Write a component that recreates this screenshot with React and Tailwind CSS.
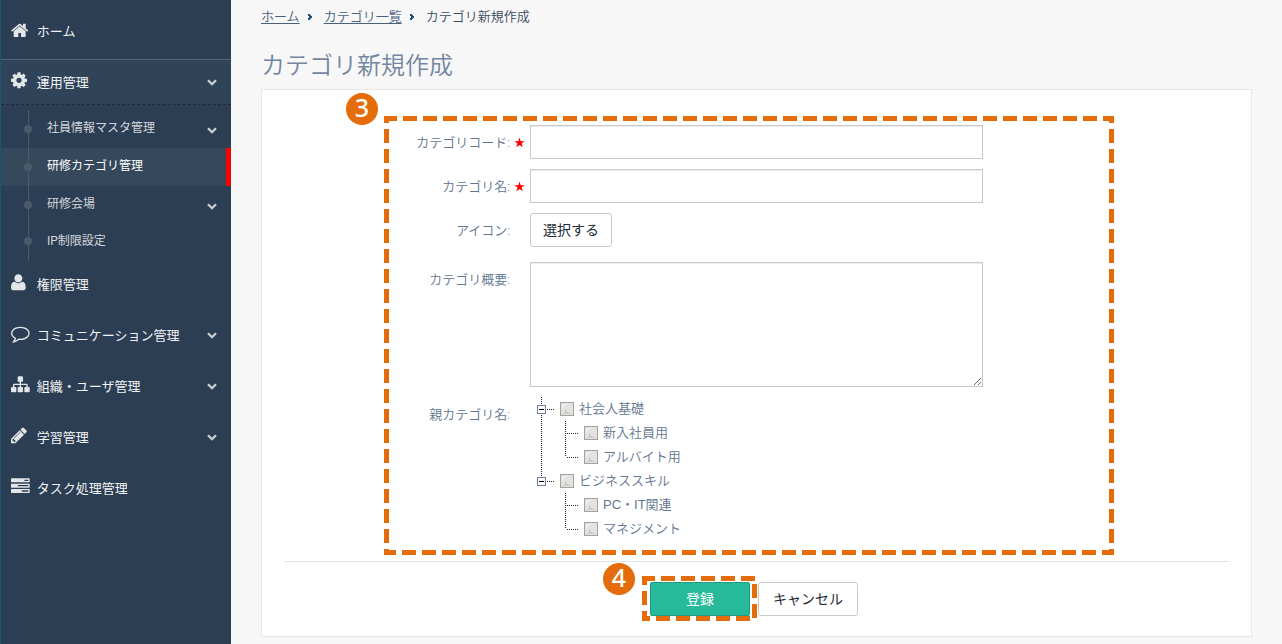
import { useState } from 'react'
import clsx from 'clsx'

const icons = {
  home: { x: 64, d: 'M1472 992v480q0 26-19 45t-45 19h-384v-384h-256v384h-384q-26 0-45-19t-19-45v-480q0-1 .5-3t.5-3l575-474 575 474q1 2 1 6zm223-69l-62 74q-8 9-21 11h-3q-13 0-21-7l-692-577-692 577q-12 8-24 7-13-2-21-11l-62-74q-8-10-7-23.5t11-21.5l719-599q32-26 76-26t76 26l244 204v-195q0-14 9-23t23-9h192q14 0 23 9t9 23v408l219 182q10 8 11 21.5t-7 23.5z' },
  cog: { x: 128, d: 'M1152 896q0-106-75-181t-181-75-181 75-75 181 75 181 181 75 181-75 75-181zm512-109v222q0 12-8 23t-20 13l-185 28q-19 54-39 91 35 50 107 138 10 12 10 25t-9 23q-27 37-99 108t-94 71q-12 0-26-9l-138-108q-44 23-91 38-16 136-29 186-7 28-36 28h-222q-14 0-24.5-8.5t-11.5-21.5l-28-184q-49-16-90-37l-141 107q-10 9-25 9-14 0-25-11-126-114-165-168-7-10-7-23 0-12 8-23 15-21 51-66.5t54-70.5q-27-50-41-99l-183-27q-13-2-21-12.5t-8-23.5v-222q0-12 8-23t19-13l186-28q14-46 39-92-40-57-107-138-10-12-10-24 0-10 9-23 26-36 98.5-107.5t94.5-71.5q13 0 26 10l138 107q44-23 91-38 16-136 29-186 7-28 36-28h222q14 0 24.5 8.5t11.5 21.5l28 184q49 16 90 37l142-107q9-9 24-9 13 0 25 10 129 119 165 170 7 8 7 22 0 12-8 23-15 21-51 66.5t-54 70.5q26 50 41 98l183 28q13 2 21 12.5t8 23.5z' },
  user: { x: 0, flip: true, d: 'M1408 131q0 -120 -73 -189.5t-194 -69.5h-874q-121 0 -194 69.5t-73 189.5q0 53 3.5 103.5t14 109t26.5 108.5t43 97.5t62 81t85.5 53.5t111.5 20q9 0 42 -21.5t74.5 -48t108 -48t133.5 -21.5t133.5 21.5t108 48t74.5 48t42 21.5q61 0 111.5 -20t85.5 -53.5t62 -81t43 -97.5t26.5 -108.5t14 -109t3.5 -103.5zM1088 1024q0 -159 -112.5 -271.5t-271.5 -112.5t-271.5 112.5t-112.5 271.5t112.5 271.5t271.5 112.5t271.5 -112.5t112.5 -271.5z' },
  comment: { x: 0, d: 'M896 384q-204 0-381.5 69.5t-282 187.5-104.5 255q0 112 71.5 213.5t201.5 175.5l87 50-27 96q-24 91-70 172 152-63 275-171l43-38 57 6q69 8 130 8 204 0 381.5-69.5t282-187.5 104.5-255-104.5-255-282-187.5-381.5-69.5zm896 512q0 174-120 321.5t-326 233-450 85.5q-70 0-145-8-198 175-460 242-49 14-114 22h-5q-15 0-27-10.5t-16-27.5v-1q-3-4-.5-12t2-10 4.5-9.5l6-9 7-8.5 8-9q7-8 31-34.5t34.5-38 31-39.5 32.5-51 27-59 26-76q-157-89-247.5-220t-90.5-281q0-174 120-321.5t326-233 450-85.5 450 85.5 326 233 120 321.5z' },
  sitemap: { x: 0, d: 'M1792 1248v320q0 40-28 68t-68 28h-320q-40 0-68-28t-28-68v-320q0-40 28-68t68-28h96v-192h-512v192h96q40 0 68 28t28 68v320q0 40-28 68t-68 28h-320q-40 0-68-28t-28-68v-320q0-40 28-68t68-28h96v-192h-512v192h96q40 0 68 28t28 68v320q0 40-28 68t-68 28h-320q-40 0-68-28t-28-68v-320q0-40 28-68t68-28h96v-192q0-52 38-90t90-38h512v-192h-96q-40 0-68-28t-28-68v-320q0-40 28-68t68-28h320q40 0 68 28t28 68v320q0 40-28 68t-68 28h-96v192h512q52 0 90 38t38 90v192h96q40 0 68 28t28 68z' },
  pencil: { x: 128, d: 'M491 1536l91-91-235-235-91 91v107h128v128h107zm523-928q0-22-22-22-10 0-17 7l-542 542q-7 7-7 17 0 22 22 22 10 0 17-7l542-542q7-7 7-17zm-54-192l416 416-832 832h-416v-416zm683 96q0 53-37 90l-166 166-416-416 166-165q36-38 90-38 53 0 91 38l235 234q37 39 37 91z' },
  tasks: { x: 0, d: 'M1024 1408h640v-128h-640v128zm-384-512h1024v-128h-1024v128zm640-512h384v-128h-384v128zm512 832v256q0 26-19 45t-45 19h-1664q-26 0-45-19t-19-45v-256q0-26 19-45t45-19h1664q26 0 45 19t19 45zm0-512v256q0 26-19 45t-45 19h-1664q-26 0-45-19t-19-45v-256q0-26 19-45t45-19h1664q26 0 45 19t19 45zm0-512v256q0 26-19 45t-45 19h-1664q-26 0-45-19t-19-45v-256q0-26 19-45t45-19h1664q26 0 45 19t19 45z' },
}

const subItems = [
  { label: '社員情報マスタ管理', arrow: true, h: 'h-[38px]' },
  { label: '研修カテゴリ管理', active: true, h: 'h-[38px]' },
  { label: '研修会場', arrow: true, h: 'h-[38px]' },
  { label: 'IP制限設定', h: 'h-[35px]' },
]
const navItems = [
  { icon: 'user', label: '権限管理' },
  { icon: 'comment', label: 'コミュニケーション管理', arrow: true },
  { icon: 'sitemap', label: '組織・ユーザ管理', arrow: true },
  { icon: 'pencil', label: '学習管理', arrow: true },
  { icon: 'tasks', label: 'タスク処理管理' },
]
const tree = [
  { label: '社会人基礎', children: ['新入社員用', 'アルバイト用'] },
  { label: 'ビジネススキル', children: ['PC・IT関連', 'マネジメント'] },
]

function Icon({ name }) {
  const { x, d, flip } = icons[name]
  return (
    <svg viewBox={`${x} 0 1792 1792`} className="-mt-[3.5px] h-[18.7px] w-[18.7px] shrink-0 overflow-visible fill-[#e3e6e8]">
      <path d={d} fillRule="evenodd" transform={flip ? 'translate(0 1536) scale(1 -1)' : undefined}/>
    </svg>
  )
}

function Chevron() {
  return (
    <svg viewBox="0 0 10 7" className="h-[7px] w-[10px]" fill="none" stroke="#c9d0d5" strokeWidth="2.3">
      <path d="M1 1.2l4 4 4-4"/>
    </svg>
  )
}

function NavRow({ icon, label, arrow, className }) {
  return (
    <a className={clsx('flex items-center pr-[14px] pl-[9.6px] text-[13px] text-[#f0f2f4]', className)}>
      <Icon name={icon}/>
      <span className="ml-[7.5px] flex-1 whitespace-nowrap">{label}</span>
      {arrow && <Chevron/>}
    </a>
  )
}

function Sidebar() {
  return (
    <nav className="w-[231px] shrink-0 border-l border-[#1b5675] bg-[#2c3e53]">
      <NavRow icon="home" label="ホーム" className="h-[60px] border-b border-[#566576] pt-[5px]"/>
      <NavRow icon="cog" label="運用管理" arrow className="h-[45px] border-b border-dashed border-[#202a35] bg-[#304459] pt-px"/>
      <ul className="relative h-[154px] pt-[5px]">
        {subItems.map(s => (
          <li key={s.label} className={clsx('flex items-center pr-[14px] text-[12px]', s.h, s.active ? 'border-r-[5px] border-[#ff0000] bg-[#36495c] text-white' : 'text-[#d2d6da]')}>
            <span className="-mt-px ml-[23px] h-2 w-2 rounded-full bg-[#4a5a69]"/>
            <span className="-mt-0.5 ml-[15px] flex-1">{s.label}</span>
            {s.arrow && <span className="mt-0.5"><Chevron/></span>}
          </li>
        ))}
        <span className="absolute top-[5px] left-[27px] h-[151px] w-px bg-[#4a5a69]"/>
      </ul>
      {navItems.map(n => <NavRow key={n.icon} {...n} className="h-[51px]"/>)}
    </nav>
  )
}

function Crumb() {
  return (
    <svg viewBox="0 0 5 6" className="mt-px h-[6px] w-[5px] fill-[#1f4e79]">
      <path d="M0 0h2v1h1v1h1v2h-1v1h-1v1h-2v-2h1v-2h-1z"/>
    </svg>
  )
}

function Label({ children, required, className }) {
  return (
    <div className={clsx('flex w-[140px] shrink-0 justify-end text-[13px] leading-[35px] font-[350] text-[#62758f]', className)}>
      <span>{children}:</span>
      <span className="flex h-[35px] w-5 items-center pl-1">
        {required && <svg viewBox="0 0 24 24" className="h-[11px] w-[11px] fill-[#ff0000]"><path d="M12 1l2.6 8 8.8.1-6.9 5.2 2.5 8.3L12 17.6l-7 5 2.5-8.3L.6 9.1 9.4 9z"/></svg>}
      </span>
    </div>
  )
}

function Check({ checked, onChange }) {
  return (
    <button type="button" onClick={onChange} className="h-[14px] w-[14px] shrink-0">
      <svg viewBox="0 0 14 14" className="h-full w-full">
        <rect x=".5" y=".5" width="13" height="13" fill="#e4e3e2" stroke="#a3a09d"/>
        <path d="M2 2h5L2 8z" fill="#ececec"/>
        <path d="M3 11h1v-2h1v-2h1v1h1v2h2v1h2v1h-8z" fill={checked ? '#62758f' : '#cfcfce'}/>
      </svg>
    </button>
  )
}

function TreeNode({ label, checked, toggle, child, last, rootLine }) {
  return (
    <li className="flex h-6 items-center">
      <svg viewBox={child ? '0 0 48 24' : '0 0 24 24'} className={clsx('h-6 shrink-0', child ? 'w-12' : 'w-6')} fill="none" stroke="#222" strokeDasharray="1 1">
        {child ? (
          <>
            {rootLine && <path d="M5.5 0v24"/>}
            <path d={last ? 'M29.5 0v12' : 'M29.5 0v24'}/>
            <path d="M31 12.5h12"/>
          </>
        ) : (
          <>
            <path d={last ? 'M5.5 0v12' : 'M5.5 0v24'}/>
            <rect x="1.5" y="8.5" width="8" height="8" fill="#fff" stroke="#6d7f9b" strokeDasharray="none"/>
            <path d="M3 12.5h5" stroke="#000" strokeDasharray="none"/>
            <path d="M11 12.5h8"/>
          </>
        )}
      </svg>
      <Check checked={checked} onChange={toggle}/>
      <span className="-mt-0.5 ml-[5px] font-['Liberation_Sans','Noto_Sans_CJK_JP',sans-serif] text-[13px] leading-none font-[350] text-[#62758f]">{label}</span>
    </li>
  )
}

function CategoryTree() {
  const [picked, setPicked] = useState([])
  const toggle = l => setPicked(p => p.includes(l) ? p.filter(x => x !== l) : [...p, l])
  return (
    <ul className="ml-[6px]">
      {tree.map((n, i) => {
        const last = i === tree.length - 1
        return [
          <TreeNode key={n.label} label={n.label} last={last} checked={picked.includes(n.label)} toggle={() => toggle(n.label)}/>,
          ...n.children.map((c, j) => (
            <TreeNode key={c} child label={c} rootLine={!last} last={j === n.children.length - 1} checked={picked.includes(c)} toggle={() => toggle(c)}/>
          )),
        ]
      })}
    </ul>
  )
}

// numbered callouts that float above the form
function Callouts() {
  return (
    <div className="pointer-events-none absolute inset-0">
      <svg viewBox="0 0 1282 644" className="h-[644px] w-[1282px]" fill="none" stroke="#e46c0a" strokeWidth="5" strokeDasharray="14 6">
        <path d="M384 118.5H1114" strokeDashoffset="1"/>
        <path d="M384 552.5H1114" strokeDashoffset="2"/>
        <path d="M386.5 116V555" strokeDashoffset="7"/>
        <path d="M1111.5 116V555" strokeDashoffset="7"/>
        <path d="M642 578.5H755" strokeDashoffset="1"/>
        <path d="M642 618.5H750" strokeDashoffset="6"/>
        <path d="M644.5 576V621" strokeDashoffset="5"/>
        <path d="M754.5 584V618"/>
      </svg>
      <span className="absolute top-[93px] left-[346px] flex h-8 w-8 items-center justify-center rounded-full bg-[#e46c0a] pb-[3px] font-['Noto_Sans','Open_Sans',sans-serif] text-[25px] leading-none font-medium text-white">3</span>
      <span className="absolute top-[563px] left-[603px] flex h-8 w-8 items-center justify-center rounded-full bg-[#e46c0a] pb-[3px] font-['Noto_Sans','Open_Sans',sans-serif] text-[25px] leading-none font-medium text-white">4</span>
    </div>
  )
}

const field = 'block w-[453px] border border-[#c9c9c9] bg-white px-3 text-[14px] shadow-[inset_0_1px_1px_rgba(0,0,0,0.075)] outline-none'

export default function App() {
  return (
    <div className="relative flex h-[644px] w-[1282px] overflow-hidden bg-[#f7f7f7] font-[Roboto,'Noto_Sans_CJK_JP',sans-serif]">
      <Sidebar/>
      <main className="flex-1 pl-[30px]">
        <div className="flex h-[33px] items-center text-[13px] font-[350] text-[#394a5e]">
          <a className="text-[#4a5f7c] underline underline-offset-2">ホーム</a>
          <span className="ml-2 w-4"><Crumb/></span>
          <a className="text-[#4a5f7c] underline underline-offset-2">カテゴリ一覧</a>
          <span className="ml-2 w-4"><Crumb/></span>
          <span>カテゴリ新規作成</span>
        </div>
        <h1 className="h-14 pt-[15px] text-[24px] leading-[36px] font-[350] text-[#73869f]">カテゴリ新規作成</h1>
        <section className="flex h-[548px] w-[991px] flex-col border border-[#e6e7eb] bg-white px-[22px] pt-[35px]">
          <form className="flex h-[436px] flex-col pl-[106px]" onSubmit={e => e.preventDefault()}>
            <div className="mb-[10px] flex h-[34px]"><Label required>カテゴリコード</Label><input className={clsx(field, 'h-[34px]')}/></div>
            <div className="mb-[10px] flex h-[34px]"><Label required>カテゴリ名</Label><input className={clsx(field, 'h-[34px]')}/></div>
            <div className="mb-[15px] flex h-[34px]">
              <Label>アイコン</Label>
              <button type="button" className="h-[34px] w-[82px] rounded-[3px] border border-[#c9c9c9] bg-white text-[14px] text-[#222b36]">選択する</button>
            </div>
            <div className="mb-[10px] flex"><Label>カテゴリ概要</Label><textarea className={clsx(field, 'h-[125px] resize')}/></div>
            <div className="flex"><Label>親カテゴリ名</Label><CategoryTree/></div>
          </form>
          <div className="flex border-t border-[#e3e4e6] pt-5 pl-[366px]">
            <button className="h-[34px] w-[100px] rounded-[2px] border border-[#1f9c82] bg-[#26b99a] text-[14px] text-white">登録</button>
            <button className="ml-2 h-[34px] w-[100px] rounded-[3px] border border-[#c9c9c9] bg-white text-[14px] text-[#222b36]">キャンセル</button>
          </div>
        </section>
      </main>
      <Callouts/>
    </div>
  )
}
